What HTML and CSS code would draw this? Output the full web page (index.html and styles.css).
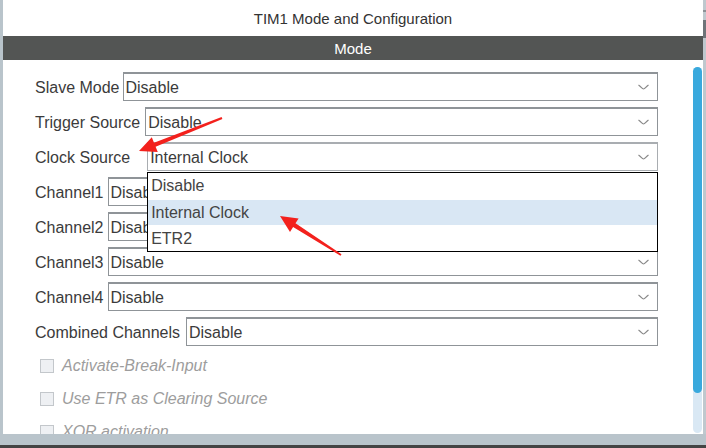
FILE: index.html
```html
<!DOCTYPE html>
<html>
<head>
<meta charset="utf-8">
<link rel="stylesheet" href="styles.css">
</head>
<body>
<div class="screen">
  <div class="main">
    <div class="lstrip"></div>
    <div class="panel">
      <div class="title">TIM1 Mode and Configuration</div>
      <div class="modebar">Mode</div>
      <div class="content">
        <div class="form">
          <div class="row">
            <span class="label">Slave Mode</span>
            <div class="select select-slave"><span class="val">Disable</span><svg class="chev" width="11" height="6" viewBox="0 0 11 6"><path d="M0.5 1 C3 2.5 4 5 5.5 5 C7 5 8 2.5 10.5 1"/></svg></div>
          </div>
          <div class="row">
            <span class="label">Trigger Source</span>
            <div class="select select-trig"><span class="val">Disable</span><svg class="chev" width="11" height="6" viewBox="0 0 11 6"><path d="M0.5 1 C3 2.5 4 5 5.5 5 C7 5 8 2.5 10.5 1"/></svg></div>
          </div>
          <div class="row">
            <span class="label">Clock Source</span>
            <div class="select select-clock"><span class="val">Internal Clock</span><svg class="chev" width="11" height="6" viewBox="0 0 11 6"><path d="M0.5 1 C3 2.5 4 5 5.5 5 C7 5 8 2.5 10.5 1"/></svg>
              <div class="dropdown">
                <div class="opt">Disable</div>
                <div class="opt opt-sel">Internal Clock</div>
                <div class="opt">ETR2</div>
              </div>
            </div>
          </div>
          <div class="row">
            <span class="label">Channel1</span>
            <div class="select"><span class="val">Disable</span><svg class="chev" width="11" height="6" viewBox="0 0 11 6"><path d="M0.5 1 C3 2.5 4 5 5.5 5 C7 5 8 2.5 10.5 1"/></svg></div>
          </div>
          <div class="row">
            <span class="label">Channel2</span>
            <div class="select"><span class="val">Disable</span><svg class="chev" width="11" height="6" viewBox="0 0 11 6"><path d="M0.5 1 C3 2.5 4 5 5.5 5 C7 5 8 2.5 10.5 1"/></svg></div>
          </div>
          <div class="row">
            <span class="label">Channel3</span>
            <div class="select"><span class="val">Disable</span><svg class="chev" width="11" height="6" viewBox="0 0 11 6"><path d="M0.5 1 C3 2.5 4 5 5.5 5 C7 5 8 2.5 10.5 1"/></svg></div>
          </div>
          <div class="row">
            <span class="label">Channel4</span>
            <div class="select"><span class="val">Disable</span><svg class="chev" width="11" height="6" viewBox="0 0 11 6"><path d="M0.5 1 C3 2.5 4 5 5.5 5 C7 5 8 2.5 10.5 1"/></svg></div>
          </div>
          <div class="row">
            <span class="label">Combined Channels</span>
            <div class="select select-comb"><span class="val">Disable</span><svg class="chev" width="11" height="6" viewBox="0 0 11 6"><path d="M0.5 1 C3 2.5 4 5 5.5 5 C7 5 8 2.5 10.5 1"/></svg></div>
          </div>
          <div class="checks">
            <div class="check"><span class="box"></span><span class="clabel">Activate-Break-Input</span></div>
            <div class="check"><span class="box"></span><span class="clabel">Use ETR as Clearing Source</span></div>
            <div class="check"><span class="box"></span><span class="clabel">XOR activation</span></div>
          </div>
        </div>
        <div class="vscroll"><div class="thumb"></div></div>
      </div>
    </div>
    <div class="rstrip"><div class="rmark"></div><div class="rthumb"></div></div>
  </div>
  <div class="bottom-gray"></div>
  <div class="bottom-dark"></div>
  <svg class="annot" width="706" height="448" viewBox="0 0 706 448">
    <polygon points="221.6,117.1 154.0,142.7 151.8,137.3 139,151 157.8,152.1 155.6,146.7 222.4,118.9"/>
    <polygon points="341.5,254.2 295.5,223.3 298.6,218.5 280,216 290,231.9 293.1,227.1 340.5,255.8"/>
  </svg>
</div>
</body>
</html>
```

FILE: styles.css
```css
html, body {
  margin: 0;
  padding: 0;
}
body {
  width: 706px;
  height: 448px;
  overflow: hidden;
  font-family: "Liberation Sans", Arial, sans-serif;
  background: #b9c4cb;
}
.screen {
  position: relative;
  width: 706px;
  height: 448px;
}
.main {
  display: flex;
  height: 434px;
}
.lstrip {
  width: 3px;
  background: #b9c4cb;
}
.panel {
  flex: 1;
  display: flex;
  flex-direction: column;
  background: #ffffff;
  min-width: 0;
}
.title {
  height: 36px;
  display: flex;
  align-items: center;
  justify-content: center;
  font-size: 15px;
  color: #333333;
}
.modebar {
  height: 24px;
  background: #535554;
  color: #ffffff;
  font-size: 15px;
  display: flex;
  align-items: center;
  justify-content: center;
}
.content {
  height: 374px;
  display: flex;
  overflow: hidden;
}
.form {
  flex: 1;
  padding: 12px 35px 0 32px;
  display: flex;
  flex-direction: column;
  gap: 6px;
  min-width: 0;
}
.row {
  display: flex;
  align-items: center;
  height: 29px;
  flex: none;
}
.label {
  font-size: 16px;
  color: #3b3b3b;
  white-space: nowrap;
  padding-top: 3px;
}
.select {
  position: relative;
  flex: 1;
  height: 29px;
  box-sizing: border-box;
  margin-left: 4px;
  border: 1px solid #8f9498;
  border-top-width: 2px;
  display: flex;
  align-items: center;
  background: #ffffff;
}
.select-slave {
  margin-left: 3px;
}
.select-trig {
  margin-left: 5px;
}
.select-clock {
  margin-left: 17px;
  border-color: #a9adb1;
}
.select-comb {
  margin-left: 6px;
}
.val {
  flex: 1;
  font-size: 16px;
  color: #3b3b3b;
  padding-left: 2px;
  padding-top: 1px;
  white-space: nowrap;
  overflow: hidden;
}
.chev {
  margin-right: 8px;
  flex: none;
}
.chev path {
  fill: none;
  stroke: #888888;
  stroke-width: 1.2;
}
.dropdown {
  position: absolute;
  left: -1px;
  right: -1px;
  top: 28px;
  height: 80px;
  box-sizing: border-box;
  border: 1px solid #000000;
  background: #ffffff;
  z-index: 5;
  display: flex;
  flex-direction: column;
}
.opt {
  height: 26px;
  display: flex;
  align-items: center;
  padding-left: 3px;
  padding-top: 1px;
  box-sizing: border-box;
  font-size: 16px;
  color: #444444;
}
.opt-sel {
  background: #d9e7f4;
  height: 26px;
  margin-top: 1px;
}
.checks {
  margin-top: 4px;
  display: flex;
  flex-direction: column;
  gap: 13px;
}
.check {
  height: 20px;
  display: flex;
  align-items: center;
  padding-left: 5px;
  flex: none;
}
.box {
  width: 14px;
  height: 14px;
  box-sizing: border-box;
  border: 1px solid #c3c7cb;
  background: #eef0f3;
  flex: none;
}
.clabel {
  margin-left: 8px;
  font-size: 16px;
  font-style: italic;
  color: #9d9d9d;
  white-space: nowrap;
}
.vscroll {
  width: 9px;
  margin: 7px 1px 0 0;
  height: 366px;
  background: #d9e8f4;
  border-radius: 5px;
  flex: none;
}
.thumb {
  height: 326px;
  background: #39a9dd;
  border-radius: 5px;
}
.rstrip {
  width: 3px;
  background: #bfc8ce;
  position: relative;
}
.rmark {
  height: 2px;
  margin-top: 10px;
  background: #8c9196;
}
.rthumb {
  height: 18px;
  margin-top: 8px;
  background: #6f7479;
}
.bottom-gray {
  height: 11px;
  background: #b9c4cb;
}
.bottom-dark {
  height: 3px;
  background: #444444;
}
.annot {
  position: absolute;
  left: 0;
  top: 0;
  pointer-events: none;
  z-index: 10;
}
.annot polygon {
  fill: #f3211d;
}
```
